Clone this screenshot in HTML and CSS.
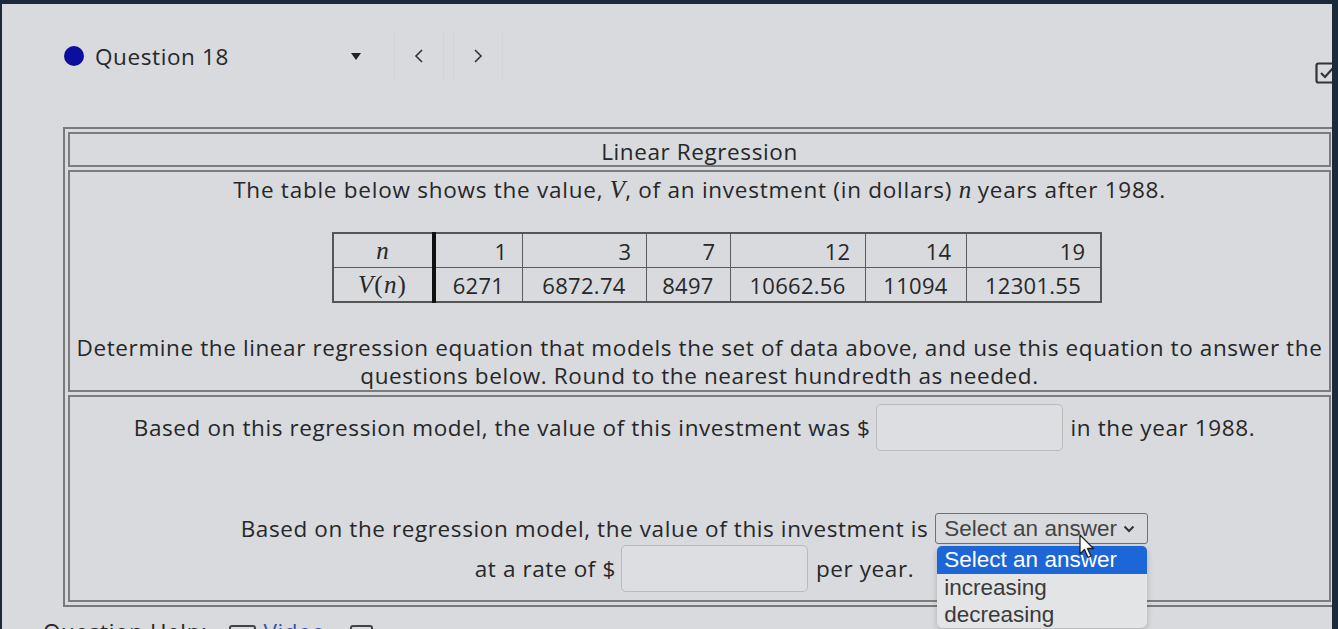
FILE: index.html
```html
<!DOCTYPE html>
<html lang="en">
<head>
  <meta charset="UTF-8">
  <meta name="viewport" content="width=device-width, initial-scale=1">
  <title>Question 18</title>
  <link rel="stylesheet" href="styles.css">
</head>
<body>

<div class="screen">
  <div class="qbar">
    <span class="dot"></span>
    <span class="qname">Question 18</span>
    <span class="caret"></span>
    <span class="nav first">
      <svg width="10" height="16" viewBox="0 0 10 16"><polyline points="8,2 2,8 8,14" fill="none" stroke="#333" stroke-width="1.6"/></svg>
    </span>
    <span class="nav">
      <svg width="10" height="16" viewBox="0 0 10 16"><polyline points="2,2 8,8 2,14" fill="none" stroke="#333" stroke-width="1.6"/></svg>
    </span>
    <span class="done">
      <svg width="22" height="22" viewBox="0 0 22 22">
        <rect x="1.5" y="1.5" width="19" height="19" rx="2" fill="none" stroke="#333" stroke-width="2.2"/>
        <polyline points="6,11 10,15 18,6" fill="none" stroke="#333" stroke-width="2.2"/>
      </svg>
    </span>
  </div>

  <table class="qtable">
    <tr><td class="title">Linear Regression</td></tr>
    <tr>
      <td class="intro">
        <p class="lead">The table below shows the value, <i class="m">V</i>, of an investment (in dollars) <i class="m">n</i> years after 1988.</p>
        <div class="data-wrap">
          <table class="data">
            <tr class="top">
              <td class="head"><i class="m">n</i></td>
              <td class="c1">1</td>
              <td class="c2">3</td>
              <td class="c3">7</td>
              <td class="c4">12</td>
              <td class="c5">14</td>
              <td class="c6">19</td>
            </tr>
            <tr class="bottom">
              <td class="head"><i class="m">V</i><span class="paren">(</span><i class="m">n</i><span class="paren">)</span></td>
              <td>6271</td>
              <td>6872.74</td>
              <td>8497</td>
              <td>10662.56</td>
              <td>11094</td>
              <td>12301.55</td>
            </tr>
          </table>
        </div>
        <p class="task">Determine the linear regression equation that models the set of data above, and use this equation to answer the<br>questions below. Round to the nearest hundredth as needed.</p>
      </td>
    </tr>
    <tr>
      <td class="answers">
        <div class="line one">
          <span>Based on this regression model, the value of this investment was $</span>
          <input class="blank" type="text">
          <span class="after">in the year 1988.</span>
        </div>
        <div class="line two">
          <span>Based on the regression model, the value of this investment is</span>
          <div class="select">
            <span>Select an answer</span>
            <svg class="chev" width="12" height="8" viewBox="0 0 12 8"><polyline points="1.5,1.5 6,6 10.5,1.5" fill="none" stroke="#333" stroke-width="2"/></svg>
            <ul class="menu">
              <li class="opt on">Select an answer</li>
              <li class="opt">increasing</li>
              <li class="opt">decreasing</li>
            </ul>
            <svg class="pointer" width="18" height="26" viewBox="0 0 18 26">
              <path d="M2,1 L2,20 L6.5,15.5 L10,23.5 L13,22 L9.5,14.5 L15.5,14.5 Z" fill="#fff" stroke="#222" stroke-width="1.3" stroke-linejoin="round"/>
            </svg>
          </div>
        </div>
        <div class="line three">
          <span>at a rate of $</span>
          <input class="blank" type="text">
          <span class="after">per year.</span>
        </div>
      </td>
    </tr>
  </table>

  <div class="help">
    <span>Question Help:</span>
    <span class="hicon"></span>
    <span class="hlink">Video</span>
    <span class="hicon second"></span>
  </div>
</div>

</body>
</html>
```

FILE: styles.css
```css
body {
  margin: 0;
  background-color: #1b2a3b;
  font-family: "Open Sans", "Noto Sans", sans-serif;
  color: #262729;
}

.screen {
  position: relative;
  margin: 4px 6px 0 2px;
  height: 625px;
  overflow: hidden;
  background-color: #d8dadd;
}

/* question navigation bar */
.qbar {
  display: flex;
  align-items: center;
  height: 48px;
  margin-top: 28px;
  padding-left: 62px;
  font-size: 22.5px;
  letter-spacing: 0.6px;
}

.dot {
  width: 20px;
  height: 20px;
  border-radius: 50%;
  background-color: #0c0e9e;
}

.qname {
  width: 130px;
  margin-left: 11px;
  white-space: nowrap;
}

.caret {
  margin-left: 126px;
  width: 0;
  height: 0;
  border-left: 5px solid transparent;
  border-right: 5px solid transparent;
  border-top: 7px solid #222;
}

.nav {
  display: flex;
  justify-content: center;
  align-items: center;
  width: 48px;
  height: 48px;
  margin-left: 9px;
  border-left: 1px solid rgba(0, 0, 0, 0.025);
  border-right: 1px solid rgba(0, 0, 0, 0.025);
}

.nav.first {
  margin-left: 33px;
}

.done {
  align-self: flex-start;
  margin: 28px -5px 0 auto;
}

/* question table */
.qtable {
  width: 1273px;
  margin: 47px 0 0 61px;
  border: 2px solid #77797b;
  border-spacing: 3px;
  font-size: 22.5px;
  letter-spacing: 0.6px;
}

.qtable > tbody > tr > td {
  border: 2px solid #7a7c7e;
  padding: 0;
  text-align: center;
}

.title {
  padding-top: 4px !important;
  line-height: 27px;
}

.m {
  font-family: "Liberation Serif", "Times New Roman", serif;
  font-size: 25px;
  font-style: italic;
  letter-spacing: 0;
}

.lead {
  margin: 5px 0 0;
  line-height: 26px;
  letter-spacing: 0.75px;
}

.data-wrap {
  display: flex;
  justify-content: center;
  margin-top: 29px;
  padding-left: 34px;
}

.data {
  border-collapse: collapse;
  border: 2px solid #555;
  font-size: 22px;
  letter-spacing: 0.3px;
}

.data td {
  height: 33px;
  padding: 0 14px;
  border: 1.5px solid #5c5c5c;
  text-align: center;
  line-height: 30px;
}

.data .top td {
  text-align: right;
}

.data .top td.head,
.data td.head {
  width: 70px;
  text-align: center;
  border-right: 4px solid #111;
}

.data .c1 { width: 58px; }
.data .c2 { width: 95px; }
.data .c3 { width: 55px; }
.data .c4 { width: 106px; }
.data .c5 { width: 72px; }
.data .c6 { width: 105px; }

.paren {
  font-family: "Liberation Serif", "Times New Roman", serif;
  font-size: 25px;
  margin: 0 1px;
}

.task {
  margin: 31px 0 0;
  line-height: 28px;
}

/* answer rows */
.answers {
  padding: 6px 10px 8px 0 !important;
}

.line {
  display: flex;
  justify-content: center;
  align-items: center;
  gap: 5px;
  white-space: nowrap;
}

.line .after {
  margin-left: 3px;
}

.line.one {
  height: 48px;
}

.line.two {
  height: 31px;
  margin-top: 62px;
  gap: 7px;
}

.line.three {
  height: 48px;
}

.blank {
  width: 187px;
  height: 47px;
  box-sizing: border-box;
  border: 1px solid #b9bbbe;
  border-radius: 5px;
  background-color: #dcdee1;
}

.select {
  position: relative;
  display: flex;
  align-items: center;
  width: 213px;
  height: 31px;
  box-sizing: border-box;
  padding-left: 8px;
  border: 1.5px solid #6f7174;
  border-radius: 3px;
  font-family: "Liberation Sans", Arial, sans-serif;
  font-size: 22.5px;
  letter-spacing: 0;
  color: #444;
}

.chev {
  margin-left: 6px;
}

.menu {
  position: absolute;
  left: 1px;
  top: 32px;
  width: 210px;
  margin: 0;
  padding: 0;
  list-style: none;
  background-color: #e3e4e6;
  border-radius: 6px;
  box-shadow: 0 2px 6px rgba(0, 0, 0, 0.2);
  text-align: left;
  color: #3a3a3a;
}

.opt {
  height: 27px;
  line-height: 27px;
  padding-left: 7px;
}

.opt.on {
  height: 28px;
  background-color: #1c66d7;
  color: #fff;
  border-radius: 5px 5px 0 0;
}

.pointer {
  position: absolute;
  left: 142px;
  top: 20px;
}

/* help links under the question */
.help {
  display: flex;
  align-items: flex-start;
  margin: 12px 0 0 41px;
  font-size: 22.5px;
  letter-spacing: 0.6px;
  line-height: 26px;
}

.hicon {
  width: 27px;
  height: 20px;
  margin: 6px 0 0 21px;
  box-sizing: border-box;
  border: 2px solid #444;
  border-radius: 3px;
}

.hicon.second {
  width: 23px;
  margin-left: 24px;
}

.hlink {
  margin-left: 8px;
  color: #3a4fa8;
}
```
